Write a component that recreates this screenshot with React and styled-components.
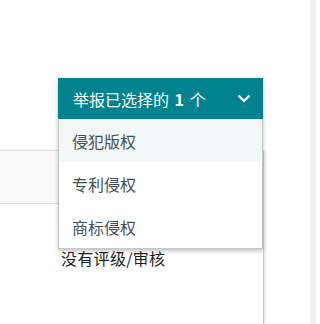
import React, { useState } from 'react'
import styled, { createGlobalStyle } from 'styled-components'

const GlobalStyle = createGlobalStyle`
  html, body {
    margin: 0;
    padding: 0;
    background: #fff;
  }
  body {
    font-family: "Noto Sans CJK SC", "Noto Sans", sans-serif;
  }
`

const Page = styled.div`
  display: flex;
  width: 316px;
  height: 324px;
  overflow: hidden;
`

const Main = styled.div`
  position: relative;
  flex: 1;
  padding-top: 150px;
  box-sizing: border-box;
`

const ScrollTrack = styled.div`
  width: 6px;
  background: #f0f0f0;
`

const Card = styled.div`
  width: 264px;
  height: 100%;
  border-top: 1px solid #dcdcdc;
  border-right: 1px solid #c9c9c9;
  box-shadow: 2px 0 2px rgba(0, 0, 0, 0.08);
  box-sizing: border-box;
  background: #fff;
`

const CardHeader = styled.div`
  height: 52px;
  background: #fafafa;
  border-bottom: 1px solid #dcdcdc;
`

const CardRow = styled.div`
  padding: 42px 0 0 61px;
  font-size: 16px;
  line-height: 24px;
  color: #1e1e1e;
  letter-spacing: 0.3px;
`

const Dropdown = styled.div`
  position: absolute;
  top: 78px;
  left: 58px;
  width: 205px;
  box-shadow: 0 2px 4px rgba(0, 0, 0, 0.25);
`

const Toggle = styled.button`
  display: flex;
  align-items: center;
  justify-content: space-between;
  width: 100%;
  height: 41px;
  padding: 0 12px 0 15px;
  border: none;
  background: #00838f;
  color: #fff;
  font-family: inherit;
  font-size: 16px;
  cursor: pointer;
  box-sizing: border-box;

  b {
    font-weight: 700;
    margin: 0 2px;
  }
`

const Menu = styled.ul`
  list-style: none;
  margin: 0;
  padding: 0;
  background: #fff;
  border: 1px solid #c4c8c9;
  border-top: none;
`

const Item = styled.li`
  height: 43px;
  display: flex;
  align-items: center;
  padding-left: 13px;
  font-size: 16px;
  color: #3f5156;
  background: ${p => (p.$active ? '#f3f7f8' : '#fff')};
  cursor: pointer;
`

const Chevron = () => (
  <svg width="14" height="9" viewBox="0 0 14 9" fill="none">
    <path d="M1.5 1.5 L7 7 L12.5 1.5" stroke="#fff" strokeWidth="2.2" />
  </svg>
)

const options = ['侵犯版权', '专利侵权', '商标侵权']

export default function App() {
  const [active, setActive] = useState(0)

  return (
    <>
      <GlobalStyle />
      <Page>
        <Main>
          <Card>
            <CardHeader />
            <CardRow>没有评级/审核</CardRow>
          </Card>
          <Dropdown>
            <Toggle>
              <span>
                举报已选择的 <b>1</b> 个
              </span>
              <Chevron />
            </Toggle>
            <Menu>
              {options.map((o, i) => (
                <Item key={o} $active={i === active} onMouseEnter={() => setActive(i)}>
                  {o}
                </Item>
              ))}
            </Menu>
          </Dropdown>
        </Main>
        <ScrollTrack />
      </Page>
    </>
  )
}
